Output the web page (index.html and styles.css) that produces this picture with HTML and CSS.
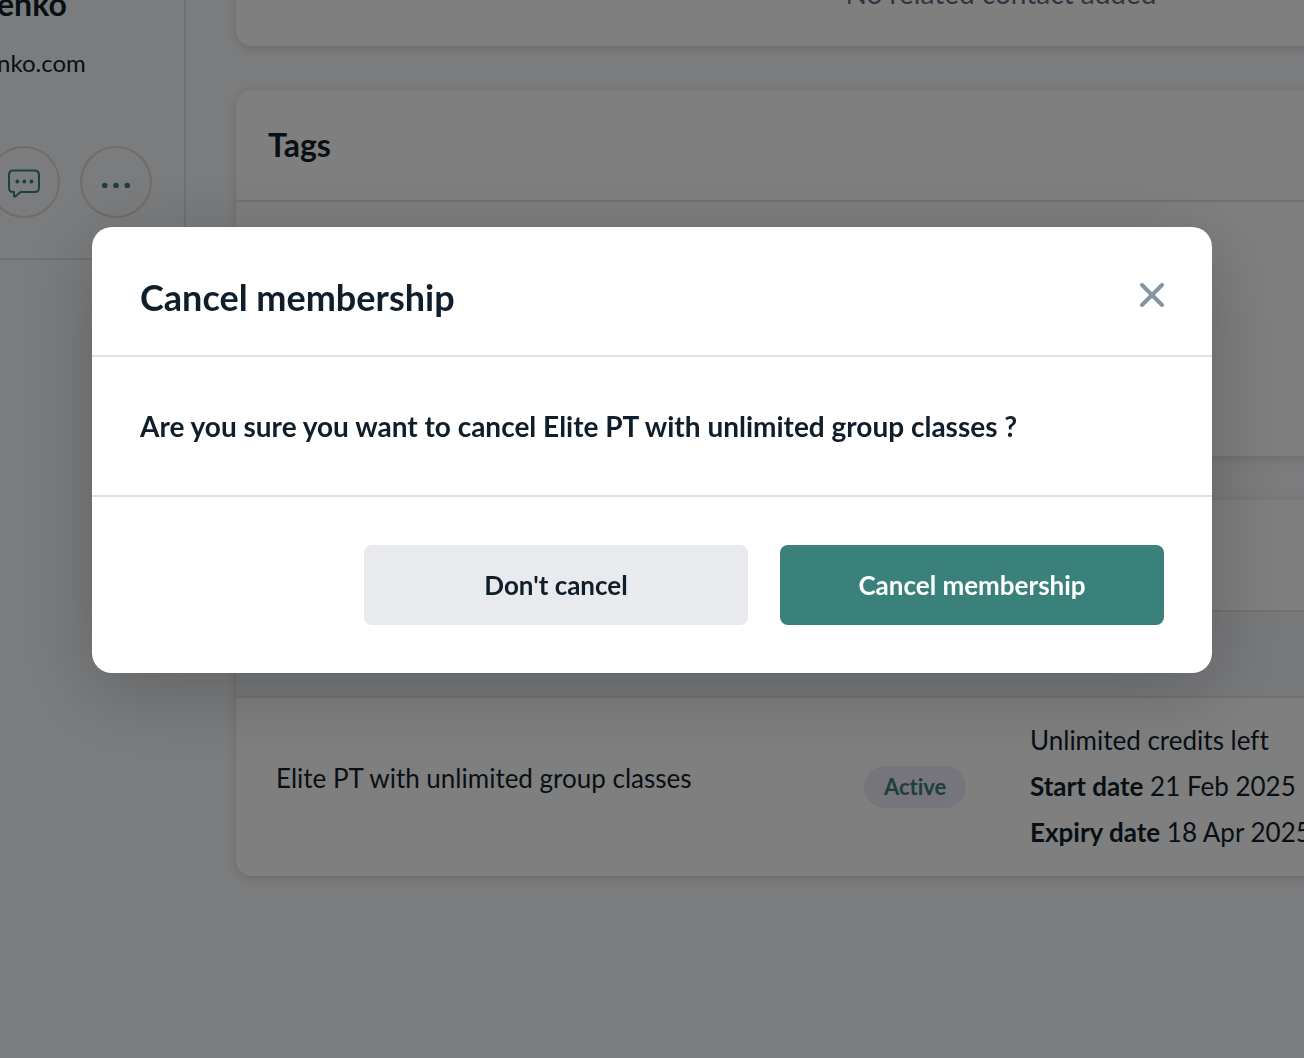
FILE: index.html
```html
<!DOCTYPE html>
<html lang="en">
<head>
<meta charset="utf-8">
<meta name="viewport" content="width=device-width, initial-scale=1">
<title>Cancel membership</title>
<link rel="stylesheet" href="styles.css">
</head>
<body>
<div class="page">
  <aside class="profile">
    <div class="profile-text">
      <h1 class="profile-name">enko</h1>
      <p class="profile-email">nko.com</p>
    </div>
    <div class="profile-actions">
      <button class="round-button" type="button" aria-label="Message">
        <svg width="34" height="34" viewBox="0 -4 34 34" fill="none" stroke="currentColor" stroke-width="2" stroke-linejoin="round">
          <path d="M6 1.500H27.500Q32 1.500 32 6V18.500Q32 23 27.500 23H13.500L8.600 27.200Q7 28.400 7 26.400V23H6Q2 23 2 18.500V6Q2 1.500 6 1.500Z"/>
          <g fill="currentColor" stroke="none"><circle cx="10.300" cy="12.500" r="1.900"/><circle cx="17.300" cy="12.500" r="1.900"/><circle cx="24.400" cy="12.500" r="1.900"/></g>
        </svg>
      </button>
      <button class="round-button" type="button" aria-label="More">
        <svg width="30" height="12" viewBox="0 0 30 12" fill="currentColor">
          <circle cx="3.700" cy="9.500" r="2.800"/><circle cx="15" cy="9.500" r="2.800"/><circle cx="26.300" cy="9.500" r="2.800"/>
        </svg>
      </button>
    </div>
  </aside>
  <main class="content">
    <section class="card contacts">
      <p class="empty">No related contact added</p>
    </section>
    <section class="card">
      <h2 class="card-title">Tags</h2>
      <div class="tags-body"></div>
    </section>
    <section class="card">
      <div class="card-title"></div>
      <div class="columns-head"></div>
      <div class="membership">
        <p class="membership-name">Elite PT with unlimited group classes</p>
        <p class="membership-status"><span class="badge">Active</span></p>
        <div class="membership-details">
          <p>Unlimited credits left</p>
          <p><strong>Start date</strong> 21 Feb 2025</p>
          <p><strong>Expiry date</strong> 18 Apr 2025</p>
        </div>
      </div>
    </section>
  </main>
</div>
<div class="overlay">
  <div class="dialog" role="dialog" aria-modal="true" aria-labelledby="dialog-title">
    <header class="dialog-header">
      <h2 class="dialog-title" id="dialog-title">Cancel membership</h2>
      <button class="close" type="button" aria-label="Close">
        <svg width="24" height="24" viewBox="0 0 24 24" fill="none" stroke="currentColor" stroke-width="4" stroke-linecap="round"><path d="M2 2L22 22M22 2L2 22"/></svg>
      </button>
    </header>
    <p class="dialog-body">Are you sure you want to cancel Elite PT with unlimited group classes ?</p>
    <footer class="dialog-footer">
      <button class="button secondary" type="button">Don't cancel</button>
      <button class="button primary" type="button">Cancel membership</button>
    </footer>
  </div>
</div>
</body>
</html>
```
FILE: styles.css
```css
* { box-sizing: border-box; }

body {
  margin: 0;
  height: 100vh;
  overflow: hidden;
  background: #f7f8fa;
  color: #101e2b;
  font-family: Lato, "Liberation Sans", sans-serif;
  font-size: 26px;
  font-variant-ligatures: none;
}

h1, h2, p { margin: 0; }
button { padding: 0; border: 0; font: inherit; font-variant-ligatures: none; cursor: pointer; }
svg { display: block; }

/* The profile page is scrolled behind the dialog */
.page {
  display: flex;
  align-items: flex-start;
  margin-top: -40px;
}

.profile {
  flex: 0 0 186px;
  height: 300px;
  padding-top: 24px;
  border-right: 2px solid #e0e2e6;
  border-bottom: 2px solid #e0e2e6;
}
.profile-text { margin-left: -3px; }
.profile-name {
  font-size: 32px;
  line-height: 40px;
}
.profile-email {
  margin: 23px 0 67px;
  font-size: 24px;
  line-height: 32px;
}
.profile-actions {
  display: flex;
  gap: 20px;
  margin-left: -12px;
}
.round-button {
  display: grid;
  place-items: center;
  flex: 0 0 72px;
  height: 72px;
  border: 2px solid #dadada;
  border-radius: 50%;
  background: none;
  color: #3a807b;
}

/* Cards run past the right edge of the window */
.content {
  flex: 1 0 0;
  display: grid;
  gap: 44px;
  margin: 0 -462px 0 50px;
}
.card {
  border-radius: 16px;
  background: #fff;
  box-shadow: 0 2px 10px rgba(16, 30, 43, 0.16);
  overflow: hidden;
}
.contacts { padding: 15px 32px 35px; }
.empty {
  color: #5d6f82;
  font-size: 28px;
  line-height: 36px;
  text-align: center;
}
.card-title {
  height: 112px;
  padding: 35px 32px;
  border-bottom: 2px solid #e2e3e8;
  font-size: 32px;
  line-height: 40px;
}
.tags-body { height: 254px; }
.columns-head {
  height: 86px;
  border-bottom: 2px solid #e2e3e8;
  background: #f1f3f7;
}
.membership {
  display: grid;
  grid-template-columns: 588px 166px 1fr;
  align-items: center;
  padding: 19px 40px 21px;
  line-height: 46px;
}
.membership-name { padding-bottom: 16px; }
.membership-status { padding-bottom: 2px; }
.badge {
  display: inline-block;
  padding: 0 20px;
  border-radius: 21px;
  background: #eeebf8;
  color: #3a807b;
  font-size: 22px;
  font-weight: 700;
  line-height: 42px;
}

.overlay {
  position: fixed;
  inset: 0;
  display: flex;
  justify-content: center;
  align-items: flex-start;
  padding: 227px 24px 24px;
  background: rgba(0, 0, 0, 0.5);
}
.dialog {
  width: 100%;
  max-width: 1120px;
  border-radius: 20px;
  background: #fff;
  box-shadow: 0 16px 80px rgba(0, 0, 0, 0.22);
}
.dialog-header {
  display: flex;
  justify-content: space-between;
  align-items: center;
  padding: 48px 48px 36px;
  border-bottom: 2px solid #e0e2e7;
}
.dialog-title {
  font-size: 36px;
  line-height: 44px;
}
.close {
  padding-bottom: 4px;
  background: none;
  color: #8296a3;
}
.dialog-body {
  padding: 50px 48px;
  border-bottom: 2px solid #e0e2e7;
  font-size: 28px;
  font-weight: 700;
  line-height: 38px;
}
.dialog-footer {
  display: flex;
  justify-content: flex-end;
  gap: 32px;
  padding: 48px;
}
.button {
  flex: 0 1 384px;
  height: 80px;
  border-radius: 8px;
  font-weight: 700;
}
.secondary { background: #e9eaee; color: #101e2b; }
.primary { background: #3a807b; color: #fff; }
```
